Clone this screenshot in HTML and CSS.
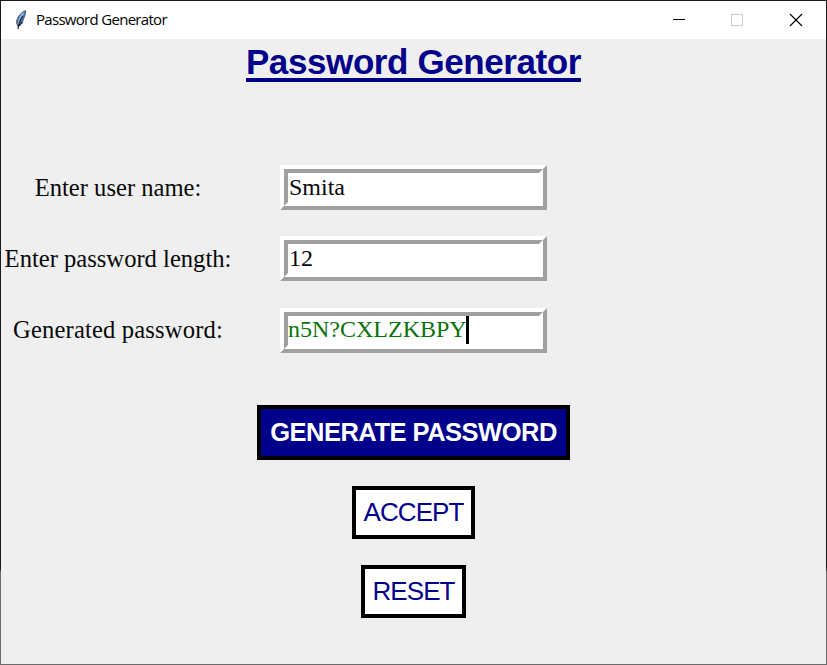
FILE: index.html
```html
<!DOCTYPE html>
<html lang="en">
<head>
<meta charset="utf-8">
<title>Password Generator</title>
<link rel="stylesheet" href="styles.css">
</head>
<body>
<div class="window">
  <header class="titlebar">
    <svg class="feather" width="14" height="22" viewBox="0 0 14 22">
      <path d="M11.500 1.500C8 3 4 7 3 10.500C2.200 13 2.500 15 4 17C7 16 9 13 9.500 10C11 7 12 4 11.500 1.500Z" fill="#4a7ebb" stroke="#59616b" stroke-width="1"/>
      <path d="M9.500 4C7 7 5 11 4.500 15" stroke="#9cc4ec" stroke-width="1.500" fill="none"/>
      <path d="M9 7C6.500 10 4.500 15 4 20M8.500 13L5 17" stroke="#1e2631" stroke-width="1.200" fill="none"/>
    </svg>
    <span class="caption">Password Generator</span>
    <svg class="controls" width="130" height="14" viewBox="0 0 130 14" shape-rendering="crispEdges">
      <path d="M0 6.500H12" stroke="#000"/>
      <path d="M58.500 1.500H69.500V12.500H58.500Z" stroke="#ccc" fill="none"/>
      <path d="M117 1L129 13M129 1L117 13" stroke="#000" stroke-width="1.100" shape-rendering="auto"/>
    </svg>
  </header>
  <main>
    <h1><span>Password Generator</span></h1>
    <div class="form">
      <span class="label">Enter user name:</span>
      <div class="field"><div class="value">Smita</div></div>
      <span class="label">Enter password length:</span>
      <div class="field"><div class="value">12</div></div>
      <span class="label wide">Generated password:</span>
      <div class="field"><div class="value generated">n5N?CXLZKBPY<i class="caret"></i></div></div>
    </div>
    <div class="actions">
      <button class="generate">GENERATE PASSWORD</button>
      <button class="accept">ACCEPT</button>
      <button class="reset">RESET</button>
    </div>
  </main>
</div>
</body>
</html>
```
FILE: styles.css
```css
* { box-sizing: border-box; }
body { margin: 0; }
.window {
  width: 827px;
  height: 665px;
  padding: 1px;
  overflow: hidden;
  background: linear-gradient(#1c1a1c 569px, #6b6b6b 572px);
}
.titlebar {
  display: flex;
  height: 38px;
  padding: 0 23px 0 13px;
  background: #fff;
}
.feather { margin-top: 8px; }
.caption {
  margin: 0 auto 0 8px;
  font: 15px/37px "Open Sans", "Noto Sans", sans-serif;
  letter-spacing: -0.7px;
  white-space: nowrap;
  color: #000;
}
.controls { margin-top: 12px; }
main {
  height: 625px;
  background: #efefef;
}
h1 {
  height: 126px;
  margin: 0;
  text-align: center;
  font: bold 35px/46px "Liberation Sans", Arial, sans-serif;
  letter-spacing: -0.4px;
  color: #00008b;
}
h1 span {
  display: inline-block;
  height: 43px;
  border-bottom: 4px solid #00008b;
}
.form {
  display: grid;
  grid-template-columns: 234px 267px;
  grid-auto-rows: 45px;
  column-gap: 45px;
  row-gap: 26.4px;
  align-items: center;
  font: 24px/38px "Liberation Serif", "Times New Roman", serif;
  color: #080808;
}
.label {
  font-size: 24.6px;
  text-align: center;
  white-space: nowrap;
}
.wide { letter-spacing: 0.16px; }
.field {
  height: 45px;
  border: 4px solid;
  border-color: #fff #a0a0a0 #a0a0a0 #fff;
}
.value {
  display: flex;
  align-items: center;
  height: 37px;
  padding: 0 0 2px 1px;
  border: 4px solid;
  border-color: #a0a0a0 #fff #fff #a0a0a0;
  background: #fff;
  box-shadow: inset 0 0 0 0 #fff;
}
.generated {
  padding-left: 0;
  color: #0a720a;
}
.caret {
  width: 3px;
  height: 28px;
  margin: 2px 0 0 -1px;
  background: #000;
}
.actions {
  display: flex;
  flex-direction: column;
  align-items: center;
  gap: 26px;
  padding-top: 52px;
}
button {
  height: 53px;
  padding: 0;
  border: 4px solid #000;
  border-radius: 0;
  background: #fff;
  color: #00008b;
  font: 26px/44px "Liberation Sans", Arial, sans-serif;
  letter-spacing: -0.95px;
  white-space: nowrap;
}
.generate {
  width: 313px;
  height: 55px;
  background: #00008b;
  color: #fff;
  font-size: 25.5px;
  font-weight: bold;
  letter-spacing: -0.5px;
}
.accept { width: 123px; }
.reset { width: 105px; }
```
